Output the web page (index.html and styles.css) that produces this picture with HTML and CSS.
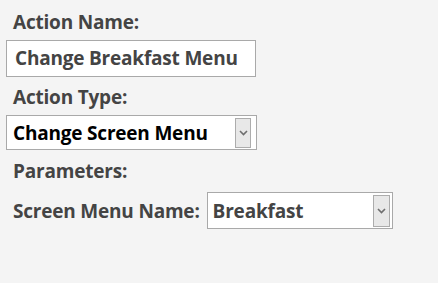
FILE: index.html
```html
<!DOCTYPE html>
<html lang="en">

<head>
    <meta charset="UTF-8">
    <title>Action Editor</title>
    <link rel="stylesheet" href="styles.css">
</head>

<body>
    <div class="action-form">
        <div class="field-label">Action Name:</div>
        <div class="text-box">Change Breakfast Menu</div>

        <div class="field-label">Action Type:</div>
        <div class="combo-box wide">
            <span class="combo-value dark">Change Screen Menu</span>
            <span class="combo-button">
                <svg width="9" height="6" viewBox="0 0 9 6"><path d="M1 1 L4.5 4.5 L8 1" fill="none" stroke="#6e6e6e" stroke-width="1.6"/></svg>
            </span>
        </div>

        <div class="field-label params">Parameters:</div>
        <div class="param-row">
            <span class="field-label inline">Screen Menu Name:</span>
            <div class="combo-box narrow">
                <span class="combo-value">Breakfast</span>
                <span class="combo-button">
                    <svg width="9" height="6" viewBox="0 0 9 6"><path d="M1 1 L4.5 4.5 L8 1" fill="none" stroke="#6e6e6e" stroke-width="1.6"/></svg>
                </span>
            </div>
        </div>
    </div>
</body>

</html>
```

FILE: styles.css
```css
body {
    margin: 0;
    background-color: #f4f4f4;
    font-family: "Open Sans", "Noto Sans", sans-serif;
    font-weight: 700;
    color: #444444;
}

.action-form {
    display: flex;
    flex-direction: column;
    align-items: flex-start;
    padding: 11px 0 0 6px;
}

.field-label {
    font-size: 19px;
    line-height: 22px;
    padding-left: 7px;
    margin-bottom: 7px;
    letter-spacing: -0.2px;
}

.text-box {
    width: 240px;
    height: 35px;
    border: 1px solid #a9a9a9;
    background-color: #ffffff;
    font-size: 19px;
    line-height: 35px;
    padding-left: 8px;
    margin-bottom: 9px;
    letter-spacing: -0.2px;
}

.combo-box {
    display: flex;
    align-items: center;
    justify-content: space-between;
    border: 1px solid #a9a9a9;
    background-color: #ffffff;
    box-sizing: border-box;
}

.combo-box.wide {
    width: 251px;
    height: 35px;
    margin-bottom: 10px;
    padding: 0 5px 0 6px;
}

.combo-box.narrow {
    width: 186px;
    height: 37px;
    padding: 0 2px 0 5px;
}

.combo-value {
    font-size: 19px;
    letter-spacing: -0.2px;
}

.combo-value.dark {
    color: #000000;
}

.combo-button {
    display: flex;
    align-items: center;
    justify-content: center;
    box-sizing: border-box;
    width: 16px;
    height: 30px;
    border: 1px solid #acacac;
    background-color: #e8e8e8;
}

.combo-box.narrow .combo-button {
    width: 17px;
    height: 32px;
}

.param-row {
    display: flex;
    align-items: center;
    margin-top: 3px;
}

.field-label.inline {
    margin-bottom: 0;
    padding-right: 7px;
}
```
